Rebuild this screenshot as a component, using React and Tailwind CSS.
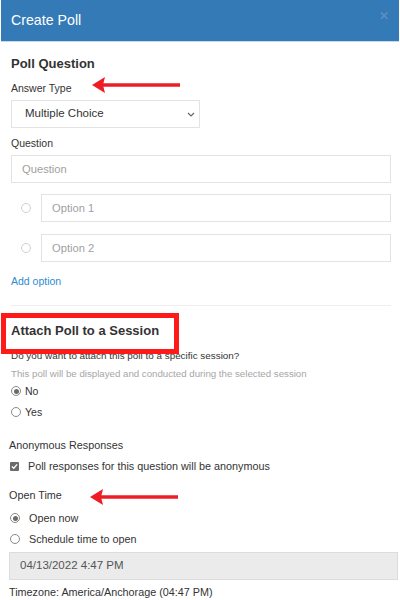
import React from "react";

function Arrow({ className }) {
  return (
    <svg width="90" height="16" viewBox="0 0 90 16" className={className}>
      <line x1="10" y1="8" x2="88" y2="8" stroke="#ee1c24" strokeWidth="3.5" />
      <polygon points="0,8 13,0 11,8 13,16" fill="#ee1c24" />
    </svg>
  );
}

function Radio({ checked }) {
  return (
    <span className="inline-flex w-[10px] h-[10px] rounded-full border border-[#8a8a8a] items-center justify-center bg-white shrink-0">
      {checked && <span className="w-[5px] h-[5px] rounded-full bg-[#6b6b6b]" />}
    </span>
  );
}

export default function App() {
  return (
    <div className="w-[400px] h-[600px] overflow-hidden bg-white text-[#333] relative" style={{ fontFamily: '"Liberation Sans", Arial, sans-serif' }}>
      <div className="ml-[1px] mr-[1px] h-[42px] bg-[#337ab7] flex items-center justify-between pl-[10px] pr-[10px] border-b border-[#c7d9ea]">
        <span className="text-white text-[14.2px] leading-[18px] -mt-[2px]">Create Poll</span>
        <span className="text-[#5b8dbd] text-[12px] font-bold -mt-[10px]">✕</span>
      </div>
      <div className="pl-[11px] pr-[9px]">
        <div className="mt-[13px] text-[13px] font-bold leading-[18px]">Poll Question</div>
        <div className="mt-[7px] text-[10.5px] leading-[16px]">Answer Type</div>
        <div className="mt-[4px] w-[189px] h-[28px] border border-[#e3e3e3] flex items-center justify-between pl-[13px] pr-[4px] text-[11.5px]">
          <span>Multiple Choice</span>
          <svg width="8" height="5" viewBox="0 0 8 5"><path d="M1 1 L4 4 L7 1" stroke="#666" strokeWidth="1.2" fill="none" /></svg>
        </div>
        <div className="mt-[7px] text-[10.5px] leading-[16px]">Question</div>
        <div className="mt-[4px] h-[28px] border border-[#e3e3e3] flex items-center pl-[10px] text-[11.2px] text-[#9f9f9f]">Question</div>
        <div className="mt-[11px] h-[28px] flex items-center">
          <div className="w-[30px] flex justify-start pl-[10px]"><span className="w-[10px] h-[10px] rounded-full border border-[#cfcfcf]" /></div>
          <div className="flex-1 h-[28px] border border-[#e3e3e3] flex items-center pl-[10px] text-[11.2px] text-[#9f9f9f]">Option 1</div>
        </div>
        <div className="mt-[12px] h-[28px] flex items-center">
          <div className="w-[30px] flex justify-start pl-[10px]"><span className="w-[10px] h-[10px] rounded-full border border-[#cfcfcf]" /></div>
          <div className="flex-1 h-[28px] border border-[#e3e3e3] flex items-center pl-[10px] text-[11.2px] text-[#9f9f9f]">Option 2</div>
        </div>
        <div className="mt-[11px] text-[10.5px] leading-[16px] text-[#2e8ccf]">Add option</div>
        <div className="mt-[16px] border-t border-[#eeeeee]" />
        <div className="mt-[16px] text-[13px] font-bold leading-[18px]">Attach Poll to a Session</div>
        <div className="mt-[8px] text-[9.9px] leading-[16px]">Do you want to attach this poll to a specific session?</div>
        <div className="mt-[3px] text-[9.7px] leading-[14px] text-[#a6a6a6]">This poll will be displayed and conducted during the selected session</div>
        <div className="mt-[2px] flex items-center gap-[4px] text-[10.5px] leading-[16px]"><Radio checked />No</div>
        <div className="mt-[5px] flex items-center gap-[4px] text-[10.5px] leading-[16px]"><Radio />Yes</div>
        <div className="mt-[17px] -ml-[2px] text-[10.8px] leading-[16px]">Anonymous Responses</div>
        <div className="mt-[5px] -ml-[1px] flex items-center gap-[9px] text-[10.8px] leading-[16px]">
          <span className="w-[9px] h-[9px] rounded-[1px] bg-[#6b6b6b] flex items-center justify-center">
            <svg width="7" height="7" viewBox="0 0 8 8"><path d="M1 4 L3.2 6 L7 1.5" stroke="white" strokeWidth="1.5" fill="none" /></svg>
          </span>
          Poll responses for this question will be anonymous
        </div>
        <div className="mt-[13px] -ml-[2px] text-[10.8px] leading-[16px]">Open Time</div>
        <div className="mt-[7px] -ml-[1px] flex items-center gap-[9px] text-[10.8px] leading-[16px]"><Radio checked />Open now</div>
        <div className="mt-[5px] -ml-[1px] flex items-center gap-[9px] text-[10.8px] leading-[16px]"><Radio />Schedule time to open</div>
        <div className="mt-[5px] -ml-[2px] -mr-[7px] h-[28px] bg-[#ebebeb] border border-[#dcdcdc] flex items-center pl-[10px] text-[11.5px] text-[#555]">04/13/2022 4:47 PM</div>
        <div className="mt-[4px] -ml-[2px] text-[10.8px] leading-[16px]">Timezone: America/Anchorage (04:47 PM)</div>
      </div>
      <Arrow className="absolute left-[92px] top-[77px]" />
      <Arrow className="absolute left-[90px] top-[489px]" />
      <div className="absolute left-[1px] top-[313px] w-[178px] h-[41px] border-[5px] border-[#ff1a1a]" />
    </div>
  );
}
